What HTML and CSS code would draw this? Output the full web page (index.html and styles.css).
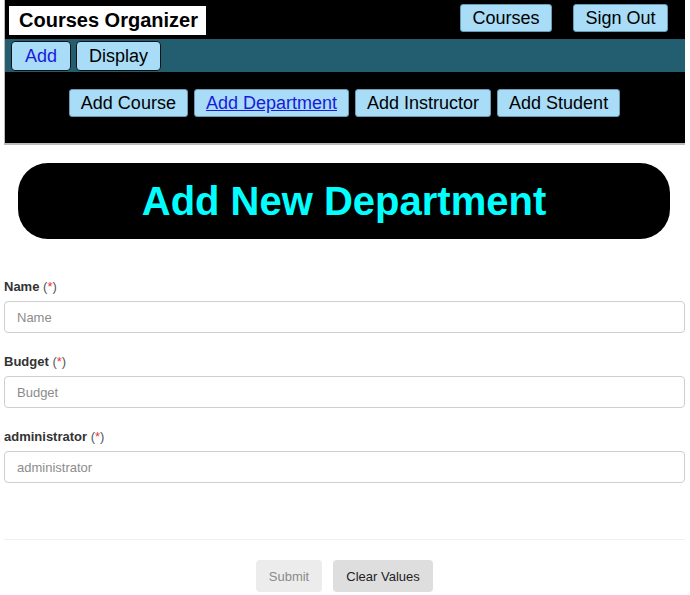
FILE: index.html
```html
<!DOCTYPE html>
<html>
<head>
<meta charset="utf-8">
<link rel="stylesheet" href="styles.css">
</head>
<body>
<header class="header">
  <div class="top-row">
    <div class="brand">Courses Organizer</div>
    <div class="top-actions">
      <button class="btn top-btn">Courses</button>
      <button class="btn top-btn signout">Sign Out</button>
    </div>
  </div>
  <nav class="tab-bar">
    <button class="btn tab active">Add</button>
    <button class="btn tab">Display</button>
  </nav>
  <div class="sub-row">
    <button class="btn sub">Add Course</button>
    <button class="btn sub current">Add Department</button>
    <button class="btn sub">Add Instructor</button>
    <button class="btn sub">Add Student</button>
  </div>
</header>
<main class="main">
  <h1 class="page-title">Add New Department</h1>
  <form class="form">
    <div class="field">
      <label class="label">Name <span class="req">(<span class="star">*</span>)</span></label>
      <input class="input" placeholder="Name">
    </div>
    <div class="field">
      <label class="label">Budget <span class="req">(<span class="star">*</span>)</span></label>
      <input class="input" placeholder="Budget">
    </div>
    <div class="field">
      <label class="label">administrator <span class="req">(<span class="star">*</span>)</span></label>
      <input class="input" placeholder="administrator">
    </div>
    <hr class="divider">
    <div class="actions">
      <button type="button" class="fbtn submit" disabled>Submit</button>
      <button type="button" class="fbtn clear">Clear Values</button>
    </div>
  </form>
</main>
</body>
</html>
```
FILE: styles.css
```css
* { box-sizing: border-box; }
html, body { margin: 0; padding: 0; background: #fff; }
body {
  padding: 0 5px 0 4px;
  font-family: "Liberation Sans", Arial, sans-serif;
}
.header {
  background: #000;
  border-left: 1px solid #bbb;
  border-bottom: 2px solid #bbb;
  height: 145px;
}
.top-row {
  display: flex;
  justify-content: space-between;
  align-items: flex-start;
  height: 39px;
}
.brand {
  margin: 6px 0 0 4px;
  background: #fff;
  color: #000;
  font-weight: bold;
  font-size: 20px;
  line-height: 29px;
  height: 29px;
  padding: 0 6px 0 10px;
  width: 197px;
  white-space: nowrap;
}
.top-actions {
  display: flex;
  gap: 21px;
  margin: 4px 17px 0 0;
}
.btn {
  font-family: "Liberation Sans", Arial, sans-serif;
  background: #a9dcf7;
  color: #000;
  border: 1px solid #6a9bb5;
  border-radius: 3px;
  cursor: pointer;
  padding: 0;
}
.top-btn {
  height: 28px;
  font-size: 18px;
  width: 92px;
}
.signout { width: 95px; }
.tab-bar {
  background: #235e70;
  height: 33px;
  display: flex;
  gap: 5px;
  padding: 2px 0 0 6px;
}
.tab {
  height: 30px;
  font-size: 18px;
  border: 1.5px solid #111;
  border-radius: 4px;
}
.tab.active { width: 60px; color: #1a1adb; }
.tab:nth-child(2) { width: 85px; }
.sub-row {
  display: flex;
  justify-content: center;
  gap: 6px;
  padding: 17px 0 0 0;
  margin-left: -1px;
}
.sub {
  height: 28px;
  font-size: 18px;
  padding: 0 11px;
}
.sub.current { color: #1a1adb; text-decoration: underline; }
.main { padding: 18px 0 0 0; }
.page-title {
  margin: 0 15px 0 14px;
  background: #000;
  color: #00ffff;
  height: 76px;
  border-radius: 30px;
  font-size: 40px;
  font-weight: bold;
  text-align: center;
  line-height: 76px;
}
.form { padding-top: 39px; }
.field { margin-bottom: 20px; }
.label {
  display: block;
  font-family: "Liberation Sans", Arial, sans-serif;
  font-weight: bold;
  font-size: 13px;
  color: #333;
  line-height: 18px;
  margin-bottom: 5px;
}
.req { color: #555; font-weight: normal; }
.star { color: #e53935; }
.input {
  display: block;
  width: 100%;
  height: 32px;
  border: 1.5px solid #cfcfcf;
  border-radius: 4px;
  padding: 0 12px;
  font-family: "Liberation Sans", Arial, sans-serif;
  font-size: 13px;
  color: #333;
}
.input::placeholder { color: #8c8c8c; }
.divider {
  border: 0;
  border-top: 1px solid #f0f0f0;
  margin: 56px 0 20px 0;
}
.actions {
  display: flex;
  justify-content: center;
  gap: 11px;
}
.fbtn {
  font-family: "Liberation Sans", Arial, sans-serif;
  font-size: 13px;
  height: 32px;
  border: 0;
  border-radius: 4px;
  padding: 0 12px;
}
.submit { background: #ececec; color: #8a8a8a; width: 66px; }
.clear { background: #dedede; color: #222; width: 100px; }
```
